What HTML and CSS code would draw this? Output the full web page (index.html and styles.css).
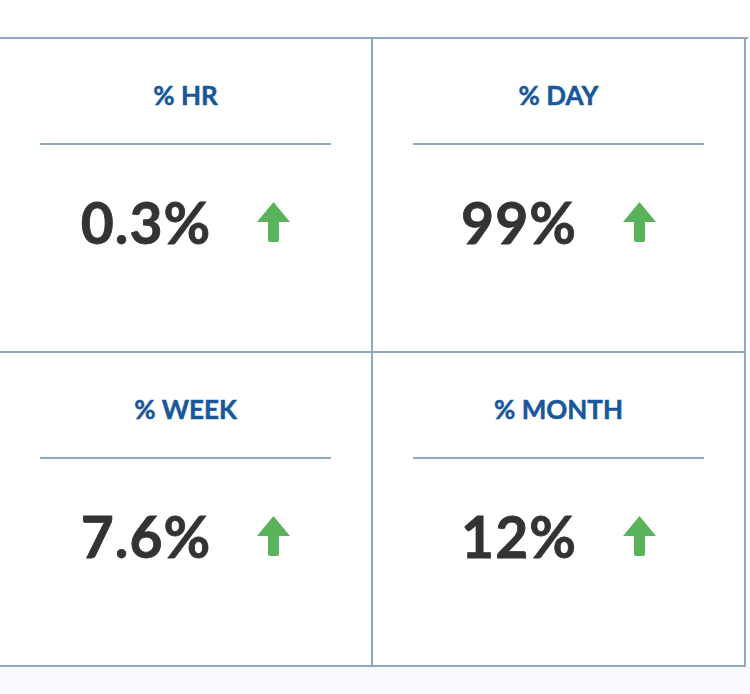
FILE: index.html
```html
<!DOCTYPE html>
<html>
<head>
<meta charset="utf-8">
<link rel="stylesheet" href="styles.css">
</head>
<body>
<div class="panel">
  <div class="grid">
    <div class="cell">
      <div class="title">% HR</div>
      <div class="rule"></div>
      <div class="value"><span class="num">0.3%</span><svg class="arrow" viewBox="0 0 33 40"><path d="M16.5 0 L33 20 L22 20 L22 38 Q22 40 20 40 L13 40 Q11 40 11 38 L11 20 L0 20 Z"/></svg></div>
    </div>
    <div class="cell">
      <div class="title">% DAY</div>
      <div class="rule"></div>
      <div class="value"><span class="num">99%</span><svg class="arrow" viewBox="0 0 33 40"><path d="M16.5 0 L33 20 L22 20 L22 38 Q22 40 20 40 L13 40 Q11 40 11 38 L11 20 L0 20 Z"/></svg></div>
    </div>
    <div class="cell">
      <div class="title">% WEEK</div>
      <div class="rule"></div>
      <div class="value"><span class="num">7.6%</span><svg class="arrow" viewBox="0 0 33 40"><path d="M16.5 0 L33 20 L22 20 L22 38 Q22 40 20 40 L13 40 Q11 40 11 38 L11 20 L0 20 Z"/></svg></div>
    </div>
    <div class="cell">
      <div class="title">% MONTH</div>
      <div class="rule"></div>
      <div class="value"><span class="num">12%</span><svg class="arrow" viewBox="0 0 33 40"><path d="M16.5 0 L33 20 L22 20 L22 38 Q22 40 20 40 L13 40 Q11 40 11 38 L11 20 L0 20 Z"/></svg></div>
    </div>
  </div>
</div>
</body>
</html>
```
FILE: styles.css
```css
html, body {
  margin: 0;
  padding: 0;
  background: #f7f9fd;
  font-family: Lato, "Open Sans", sans-serif;
  overflow: hidden;
}
.panel {
  background: #ffffff;
  padding-top: 37px;
}
.grid {
  display: grid;
  grid-template-columns: 373px 373px;
  grid-auto-rows: 314px;
  margin-left: -2px;
  width: 748px;
  border-top: 2px solid #8ea9c1;
  border-left: 2px solid #8ea9c1;
}
.cell {
  box-sizing: border-box;
  border-right: 2px solid #8ea9c1;
  border-bottom: 2px solid #8ea9c1;
  padding: 0 40px;
  display: flex;
  flex-direction: column;
}
.title {
  margin-top: 40px;
  font-size: 26px;
  line-height: 32px;
  font-weight: 700;
  color: #17579a;
  -webkit-text-stroke: 0.5px #17579a;
  text-align: center;
}
.rule {
  margin-top: 32px;
  height: 2px;
  background: #8ea9c1;
}
.value {
  margin-top: 46px;
  display: flex;
  justify-content: center;
  align-items: center;
  gap: 46px;
}
.num {
  font-size: 57px;
  line-height: 62px;
  font-weight: 700;
  letter-spacing: 1px;
  color: #333333;
  -webkit-text-stroke: 0.8px #333333;
}
.arrow {
  width: 33px;
  height: 40px;
  fill: #58b35a;
}
```
